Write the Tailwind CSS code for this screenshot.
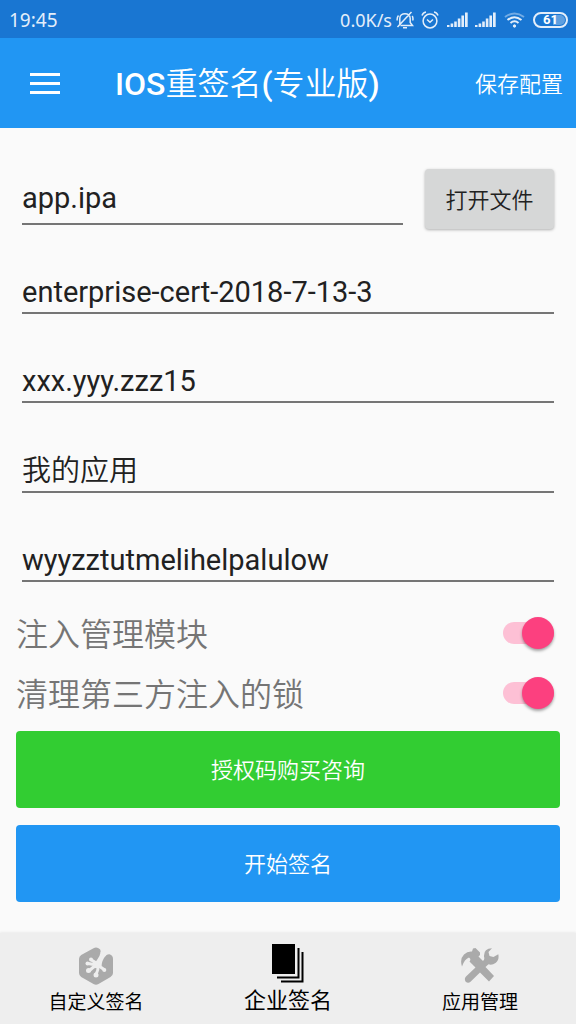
<!DOCTYPE html>
<html lang="zh-CN">
<head>
<meta charset="utf-8">
<meta name="viewport" content="width=device-width, initial-scale=1">
<title>IOS重签名(专业版)</title>
<script src="https://cdn.jsdelivr.net/npm/@tailwindcss/browser@4"></script>
</head>
<body class="flex min-h-screen flex-col bg-[#fafafa] font-['Roboto','Noto_Sans_CJK_SC',sans-serif] text-[#212121]">
  <div class="flex h-[38px] items-center justify-between bg-[#1976d2] pt-px pr-2 pl-[9px] text-[#e3eefa]">
    <span class="font-['Noto_Sans','Roboto',sans-serif] text-[19px] leading-6">19:45</span>
    <div class="flex items-center">
      <span class="mr-1 font-['Noto_Sans','Roboto',sans-serif] text-[18px] leading-6">0.0K/s</span>
      <svg class="mr-[7px] h-[18px] w-[18px]" viewBox="0 0 18 18" fill="none" stroke="currentColor" stroke-width="1.5" aria-hidden="true">
        <path d="M3.800 13V7.500C3.800 1 14.200 1 14.200 7.500V11.500L16.500 14.500H4.500M7 16.800H11M1.500 16L15.500 1M2.500 4.500Q.8 6.500 1.200 9.500M16.200 5Q17.300 6.500 16.800 9.500"/>
      </svg>
      <svg class="mr-2 h-[18px] w-[18px]" viewBox="0 0 18 18" fill="none" stroke="currentColor" stroke-width="1.500" aria-hidden="true">
        <circle cx="9" cy="10" r="6.900"/><path d="M6 8.500L9 11.200L12 8.500M1 4.500Q2 1.500 5 1M17 4.500Q16 1.500 13 1"/>
      </svg>
      <svg class="mr-[7px] h-4 w-[21px]" viewBox="0 0 21 16" fill="currentColor" aria-hidden="true">
        <path d="M0 13h2.500v2H0zM3.600 11.500h2.600v3.500H3.600zM7.200 9.500h2.600V15H7.200zM10.800 6.500h2.600V15h-2.600zM14.400 3.500H17V15h-2.600zM18 .5h2.700V15H18z"/>
      </svg>
      <svg class="mr-2 h-4 w-[21px]" viewBox="0 0 21 16" fill="currentColor" aria-hidden="true">
        <path d="M0 13h2.500v2H0zM3.600 11.500h2.600v3.500H3.600zM7.200 9.500h2.600V15H7.200zM10.800 6.500h2.600V15h-2.600zM14.400 3.500H17V15h-2.600zM18 .5h2.700V15H18z"/>
      </svg>
      <svg class="mr-2 h-4 w-[21px]" viewBox="0 0 21 16" fill="none" stroke="currentColor" stroke-width="2" aria-hidden="true">
        <path d="M1 5Q10.500-2 20 5" stroke-opacity=".45"/><path d="M3.500 8Q10.500 2.500 17.500 8M6.500 11Q10.500 7.500 14.500 11"/><circle cx="10.500" cy="14" r="1.200" fill="currentColor" stroke-width="1"/>
      </svg>
      <div class="flex h-4 w-[35px] rounded-full border-2 border-current p-px">
        <span class="flex flex-1 items-center justify-center rounded-full bg-linear-to-r from-transparent from-60% to-white/30 to-60% text-[13px] leading-none font-bold text-white">61</span>
      </div>
    </div>
  </div>

  <header class="flex h-[90px] items-center bg-[#2196f3] pr-[13px] pl-[30px] text-white">
    <button type="button" aria-label="菜单" class="mr-[55px] flex w-[30px] flex-col gap-[6px]">
      <span class="h-[3px] w-full bg-white"></span>
      <span class="h-[3px] w-full bg-white"></span>
      <span class="h-[3px] w-full bg-white"></span>
    </button>
    <h1 class="flex-1 pt-[2px] text-[32px] leading-10 font-medium whitespace-nowrap">IOS<span class="font-[350]">重签名</span>(<span class="font-[350]">专业版</span>)</h1>
    <button type="button" class="pt-1 text-[22px] leading-8 font-[350] whitespace-nowrap">保存配置</button>
  </header>

  <main class="flex-1">
    <form class="px-4 pt-[41px] pb-4">
      <div class="px-[6px]">
        <div class="flex items-start justify-between gap-[22px]">
          <input type="text" aria-label="应用文件" value="app.ipa" class="h-14 min-w-0 flex-1 border-b-2 border-[#757575] bg-transparent pt-[12px] pb-2 text-[29px] leading-[34px] outline-none">
          <button type="button" class="h-[60px] w-[129px] rounded-[4px] bg-[#d6d7d7] pt-[2px] text-[22px] font-[350] shadow-[0_1px_3px_rgba(0,0,0,0.3)]">打开文件</button>
        </div>
        <input type="text" aria-label="证书" value="enterprise-cert-2018-7-13-3" class="mt-[37px] block h-12 w-full border-b-2 border-[#757575] bg-transparent pt-[9px] pb-[3px] text-[29px] leading-[34px] outline-none">
        <input type="text" aria-label="包名" value="xxx.yyy.zzz15" class="mt-[41px] block h-12 w-full border-b-2 border-[#757575] bg-transparent pt-[9px] pb-[3px] text-[29px] leading-[34px] outline-none">
        <input type="text" aria-label="应用名称" value="我的应用" class="mt-[42px] block h-12 w-full border-b-2 border-[#757575] bg-transparent pb-px text-[29px] leading-[34px] font-[350] outline-none">
        <input type="text" aria-label="授权码" value="wyyzztutmelihelpalulow" class="mt-[41px] block h-12 w-full border-b-2 border-[#757575] bg-transparent pt-[9px] pb-[3px] text-[29px] leading-[34px] outline-none">
      </div>
      <div class="mt-[21px] pr-[6px] text-[32px] font-[350] text-[#757575]">
        <label class="flex h-[60px] items-center justify-between">
          <span class="pt-1">注入管理模块</span>
          <input type="checkbox" role="switch" checked class="relative h-8 w-[51px] appearance-none before:absolute before:inset-x-0 before:inset-y-[5px] before:rounded-full before:bg-[#fdc0d5] after:absolute after:top-0 after:left-0 after:size-8 after:rounded-full after:bg-[#fafafa] after:shadow-[0_2px_3px_rgba(0,0,0,0.35)] checked:after:left-[19px] checked:after:bg-[#fc407f]">
        </label>
        <label class="flex h-[60px] items-center justify-between">
          <span class="pt-1">清理第三方注入的锁</span>
          <input type="checkbox" role="switch" checked class="relative h-8 w-[51px] appearance-none before:absolute before:inset-x-0 before:inset-y-[5px] before:rounded-full before:bg-[#fdc0d5] after:absolute after:top-0 after:left-0 after:size-8 after:rounded-full after:bg-[#fafafa] after:shadow-[0_2px_3px_rgba(0,0,0,0.35)] checked:after:left-[19px] checked:after:bg-[#fc407f]">
        </label>
      </div>
      <button type="button" class="mt-2 block h-[77px] w-full rounded-[4px] bg-[#32cd32] pt-[2px] text-[22px] font-[350] text-white">授权码购买咨询</button>
      <button type="submit" class="mt-[17px] block h-[77px] w-full rounded-[4px] bg-[#2196f3] pt-[2px] text-[22px] font-[350] text-white">开始签名</button>
    </form>
  </main>

  <nav class="grid h-[91px] grid-cols-3 bg-[#eeeeee] text-black shadow-[0_-1px_2px_rgba(0,0,0,0.06)]">
    <a href="#custom" class="flex flex-col items-center pt-[14px]">
      <svg class="h-[38px] w-9" viewBox="0 0 36 38" aria-hidden="true">
        <path fill="#aaa" d="M15.500 1.200Q18 0 20.500 1.200Q23.500 2.500 22.500 6L27 9.500Q29 7 31.500 7.300Q35 8.500 35 12V26Q35 28.500 32.500 30L20.500 37Q18 38.300 15.500 37L3.200 30Q1 28.500 1 26V12Q1 9.500 3.200 8Z"/>
        <path fill="#eee" d="M23 4L29 7L26 11Q24 14 23.500 18L21 21L17 20L16 17L19 13Q22 9 23 4Z"/>
        <g fill="none" stroke="#eee" stroke-linecap="round" stroke-linejoin="round">
          <path stroke-width="3" d="M19 16.500L13.500 13M18.500 18L10 16.500M19 19L15.500 20L11.500 23.500M20 19Q20.500 23 18 27.500M22 18L22.500 20L26 22.500"/>
        </g>
        <g fill="#eee"><circle cx="13" cy="12.500" r="2"/><circle cx="9.500" cy="16.500" r="2"/><circle cx="10.500" cy="23.500" r="2.500"/><circle cx="18" cy="28" r="2.500"/><circle cx="26.300" cy="23" r="2"/></g>
      </svg>
      <span class="pt-[3px] text-[19px] leading-[30px]">自定义签名</span>
    </a>
    <a href="#enterprise" aria-current="page" class="flex flex-col items-center pt-[11px]">
      <svg class="h-[39px] w-8" viewBox="0 0 32 39" aria-hidden="true">
        <path d="M0 0H23V30H0Z"/>
        <path fill="none" stroke="#000" stroke-width="2" d="M26.500 4V33.500H5M30.500 8V37.500H9"/>
      </svg>
      <span class="pt-px text-[22px] leading-[34px]">企业签名</span>
    </a>
    <a href="#apps" class="flex flex-col items-center pt-[14px]">
      <svg class="h-[38px] w-[38px]" viewBox="0 0 38 38" aria-hidden="true">
        <path fill="#aaa" d="M1 19.500Q-1.500 12 3 7.500Q6.500 4 11 4.500L12 1.500L14.500 1L19 5.500L19 8L17.500 9.500L22 14Q24 12.500 23 9.500Q22.500 1.500 31 1.300L27.500 5L28.500 9L32.500 10L37.300 7.200Q38.500 13 34.500 16Q31 18.500 27.500 17.300L24.500 20L33 29L28 34.500L19 25.500L9.500 34.800Q7 37 4.500 34.500Q3 31.500 5 29.500L14.500 20.500L8.500 14.500Q10.500 12 8 10.500Q3.500 12 1 19.500Z"/>
      </svg>
      <span class="pt-[3px] text-[19px] leading-[30px]">应用管理</span>
    </a>
  </nav>
</body>
</html>
